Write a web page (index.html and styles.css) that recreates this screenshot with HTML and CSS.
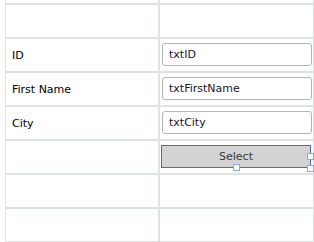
FILE: index.html
```html
<!DOCTYPE html>
<html lang="en">
<head>
  <meta charset="UTF-8" />
  <title>Lookup form</title>
  <link rel="stylesheet" href="styles.css">
</head>
<body>
  <div class="form-grid">
    <div class="cell cell-top"></div>
    <div class="cell cell-top"></div>

    <div class="cell"></div>
    <div class="cell"></div>

    <div class="cell label">ID</div>
    <div class="cell field">
      <input type="text" class="textbox" value="txtID" readonly />
    </div>

    <div class="cell label">First Name</div>
    <div class="cell field">
      <input type="text" class="textbox" value="txtFirstName" readonly />
    </div>

    <div class="cell label">City</div>
    <div class="cell field">
      <input type="text" class="textbox" value="txtCity" readonly />
    </div>

    <div class="cell"></div>
    <div class="cell field">
      <div class="selected">
        <button class="select-btn">Select</button>
        <!-- designer resize handles -->
        <span class="handle handle-right"></span>
        <span class="handle handle-bottom"></span>
        <span class="handle handle-corner"></span>
      </div>
    </div>

    <div class="cell"></div>
    <div class="cell"></div>

    <div class="cell"></div>
    <div class="cell"></div>
  </div>
</body>
</html>
```

FILE: styles.css
```css
* {
  box-sizing: border-box;
  margin: 0;
  padding: 0;
}

body {
  background: #ffffff;
  font-family: 'DejaVu Sans', Verdana, sans-serif;
  font-size: 11px;
  color: #000;
  padding-left: 5px;
  overflow: hidden;
}

.form-grid {
  display: grid;
  grid-template-columns: 152px 153px;
  grid-template-rows: 3px repeat(7, 32px);
  gap: 2px;
  width: 309px;
  background: #dce3e1;
  border: 1px solid #dce3e1;
  border-top: none;
}

.cell {
  background: #ffffff;
}

.label {
  display: flex;
  align-items: center;
  padding-left: 6px;
}

.field {
  padding: 4px 1px 0 2px;
}

.textbox {
  display: block;
  width: 150px;
  height: 23px;
  padding: 0 6px;
  border: 1px solid #b4b4b4;
  border-radius: 3px;
  font-family: 'DejaVu Sans', Verdana, sans-serif;
  font-size: 11px;
  color: #1c1030;
  background: #fff;
  outline: none;
}

.selected {
  position: relative;
  width: 150px;
  height: 23px;
  margin-left: -1px;
}

.select-btn {
  display: block;
  width: 100%;
  height: 100%;
  border: 1px solid #3f6bd9;
  background: #d3d3d3;
  font-family: 'DejaVu Sans', Verdana, sans-serif;
  font-size: 11px;
  color: #3a3a3a;
}

.handle {
  position: absolute;
  width: 7px;
  height: 7px;
  background: #fff;
  border: 1px solid #86a8f0;
}

.handle-right {
  right: -3px;
  top: 8px;
}

.handle-bottom {
  left: 72px;
  bottom: -3px;
}

.handle-corner {
  right: -3px;
  bottom: -4px;
}
```
